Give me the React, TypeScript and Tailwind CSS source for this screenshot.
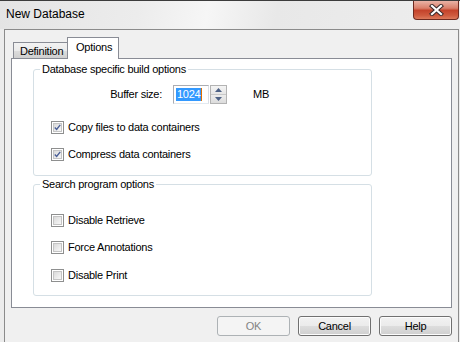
import React from "react";

const font = { fontFamily: '"Liberation Sans", Arial, sans-serif' };

function Check({ checked }: { checked?: boolean }) {
  return (
    <div className="w-[13px] h-[13px] border border-[#8e8f8f] bg-white p-[1px] shrink-0">
      <div className="w-full h-full border border-[#c4c4c4] bg-[linear-gradient(135deg,#d9d9d9_0%,#ececec_60%,#f7f7f7_100%)] flex items-center justify-center">
        {checked && (
          <svg width="9" height="9" viewBox="0 0 9 9">
            <path d="M1 4.5 L3.4 7 L8 1.2" fill="none" stroke="#4a5f97" strokeWidth="1.8" strokeLinejoin="miter" />
          </svg>
        )}
      </div>
    </div>
  );
}

function CheckRow({ label, checked, className }: { label: string; checked?: boolean; className: string }) {
  return (
    <div className={"flex items-center h-[13px] ml-[17px] " + className}>
      <Check checked={checked} />
      <span className="ml-[4px] text-[11px] leading-[13px] text-black whitespace-nowrap">{label}</span>
    </div>
  );
}

function Btn({ label, disabled }: { label: string; disabled?: boolean }) {
  return (
    <div
      className={
        "w-[73px] h-[20px] rounded-[3px] border flex items-center justify-center text-[11px] " +
        (disabled
          ? "border-[#adb2b5] bg-[#f4f4f4] text-[#838383]"
          : "border-[#707070] bg-[linear-gradient(180deg,#f2f2f2_0%,#ebebeb_50%,#dddddd_51%,#cfcfcf_100%)] text-black shadow-[inset_0_0_0_1px_#fcfcfc]")
      }
    >
      {label}
    </div>
  );
}

export default function App() {
  return (
    <div className="w-[460px] h-[342px] overflow-hidden flex flex-col border-t border-[#3c3c3c] bg-[#ececec]" style={font}>
      {/* Title bar */}
      <div className="h-[28px] flex items-start bg-[linear-gradient(100deg,#e4e4e4_0%,#ececec_30%,#f6f6f6_45%,#e8e8e8_60%,#eeeeee_100%)]">
        <div className="pl-[6px] pt-[6px] text-[12px] leading-[15px] text-black">New Database</div>
        <div className="ml-auto mr-[1px] w-[46px] h-[19px] rounded-b-[4px] border border-t-0 border-[#6e2a20] bg-[linear-gradient(180deg,#eab3a6_0%,#da7f6a_40%,#c4432b_52%,#cf5a3e_80%,#dc7a5c_100%)] flex items-center justify-center">
          <svg width="15" height="12" viewBox="0 0 15 12">
            <path d="M3 2 L12 10 M12 2 L3 10" stroke="#3c2a2a" strokeWidth="4.2" strokeLinecap="square" />
            <path d="M3 2 L12 10 M12 2 L3 10" stroke="#ffffff" strokeWidth="2.2" strokeLinecap="square" />
          </svg>
        </div>
      </div>

      {/* Client area */}
      <div className="flex-1 ml-[4px] mr-[1px] border-l border-t border-r border-[#8b8b8b] bg-[#f0f0f0] flex flex-col tracking-[-0.25px]">
        {/* Tabs */}
        <div className="ml-[6px] mt-[7px] h-[21px] flex items-end relative z-10">
          <div className="ml-[2px] w-[54px] h-[16px] border-l border-t border-[#898c95] bg-[linear-gradient(180deg,#f2f2f2_0%,#ebebeb_50%,#dddddd_51%,#cfcfcf_100%)] text-[11px] leading-[14px] text-black pl-[6px] pt-[1px]">
            Definition
          </div>
          <div className="w-[52px] h-[22px] -mb-px border-l border-t border-r border-[#898c95] bg-white text-[11px] leading-[14px] text-black pl-[8px] pt-[2px]">
            Options
          </div>
        </div>

        {/* Panel */}
        <div className="ml-[6px] w-[441px] h-[250px] border border-[#898c95] bg-white flex flex-col">
          <fieldset className="ml-[21px] mt-[4px] w-[339px] h-[113px] border border-[#d5dfe5] rounded-[3px] flex flex-col">
            <legend className="ml-[6px] px-[2px] text-[11px] leading-[13px] text-black">Database specific build options</legend>
            <div className="mt-[9px] h-[19px] flex items-center">
              <div className="w-[128px] text-right text-[11px] text-black">Buffer size:</div>
              <div className="ml-[11px] w-[36px] h-[19px] border border-[#abadb3] border-b-[#e3e9ef] border-r-[#dbdfe6] bg-white flex items-center pl-[2px]">
                <span className="bg-[#3399ff] text-white text-[11px] leading-[13px] px-[1px]">1024</span>
                <span className="w-[1px] h-[13px] bg-[#e07000]" />
              </div>
              <div className="ml-[1px] w-[17px] h-[19px] border border-[#b3b3b3] flex flex-col bg-white">
                <div className="flex-1 border-b border-[#c8c8c8] bg-[linear-gradient(180deg,#f4f4f4,#e6e6e6)] flex items-center justify-center">
                  <svg width="7" height="4" viewBox="0 0 7 4"><path d="M0 4 L3.5 0 L7 4 Z" fill="#4d6185" /></svg>
                </div>
                <div className="flex-1 bg-[linear-gradient(180deg,#ececec,#dcdcdc)] flex items-center justify-center">
                  <svg width="7" height="4" viewBox="0 0 7 4"><path d="M0 0 L7 0 L3.5 4 Z" fill="#4d6185" /></svg>
                </div>
              </div>
              <div className="ml-[26px] text-[11px] text-black">MB</div>
            </div>
            <CheckRow className="mt-[17px]" label="Copy files to data containers" checked />
            <CheckRow className="mt-[14px]" label="Compress data containers" checked />
          </fieldset>

          <fieldset className="ml-[21px] mt-[2px] w-[339px] h-[118px] border border-[#d5dfe5] rounded-[3px] flex flex-col">
            <legend className="ml-[6px] px-[2px] text-[11px] leading-[13px] text-black">Search program options</legend>
            <CheckRow className="mt-[23px]" label="Disable Retrieve" />
            <CheckRow className="mt-[14px]" label="Force Annotations" />
            <CheckRow className="mt-[15px]" label="Disable Print" />
          </fieldset>
        </div>

        {/* Buttons */}
        <div className="mt-[8px] mr-[6px] flex justify-end gap-[8px]">
          <Btn label="OK" disabled />
          <Btn label="Cancel" />
          <Btn label="Help" />
        </div>
      </div>
    </div>
  );
}
